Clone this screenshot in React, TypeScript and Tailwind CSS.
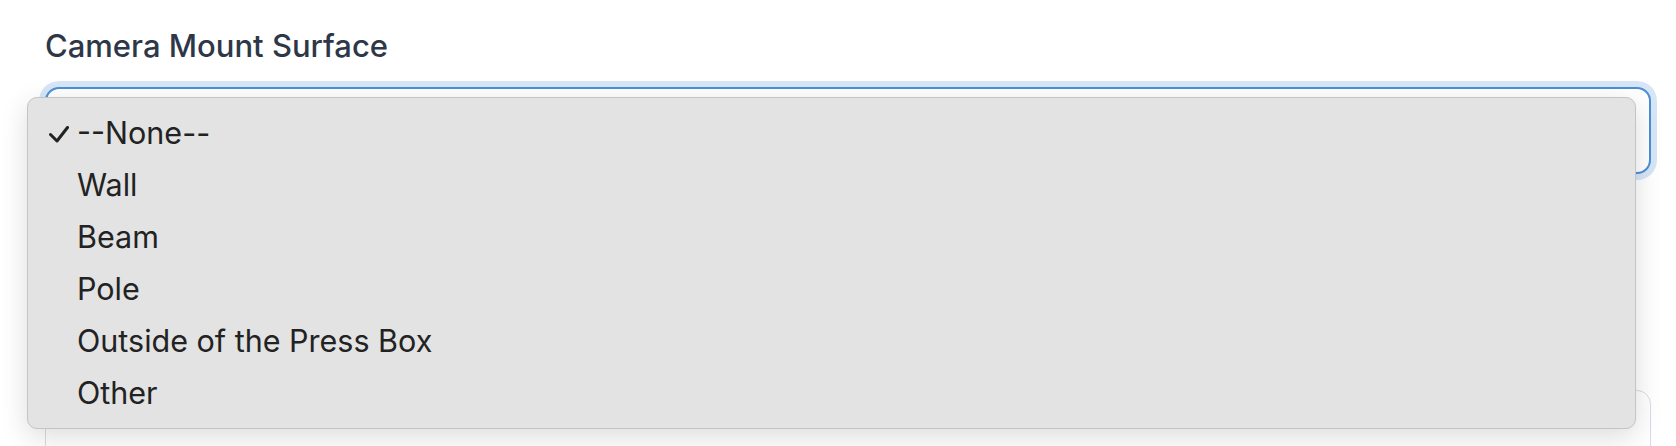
import { useState } from "react";

// Options shown in the open native select menu
const options = ["--None--", "Wall", "Beam", "Pole", "Outside of the Press Box", "Other"];

export default function App() {
  const [selected] = useState("--None--");

  return (
    <div className="relative h-screen w-full overflow-hidden bg-white font-['Inter',sans-serif] pl-[45px] pr-[25px] pt-[27px]">
      {/* Field label */}
      <div className="text-[31px] leading-[37px] font-medium text-[#2d3748]">Camera Mount Surface</div>

      {/* Focused select box (mostly covered by the menu) */}
      <div className="mt-[23px] h-[87px] w-full rounded-[14px] border-2 border-[#4a8fd6] bg-white shadow-[0_0_0_6px_rgba(74,143,214,0.22)]" />

      {/* Next field peeking out below */}
      <div className="mt-[216px] h-[80px] w-full rounded-[14px] border border-[#d9dce4] bg-white" />

      {/* Open dropdown menu overlay */}
      <div className="absolute left-[27px] top-[97px] w-[1609px] rounded-[10px] border border-[#c4c4c4] bg-[#e3e3e3] py-[9px] shadow-[0_8px_28px_rgba(0,0,0,0.14)]">
        {options.map((opt) => (
          <div key={opt} className="flex h-[52px] items-center text-[30.5px] leading-[52px] text-[#222222]">
            <div className="flex w-[49px] shrink-0 items-center pl-[21px]">
              {opt === selected && (
                <svg width="20" height="17" viewBox="0 0 20 17" className="mt-[2px]">
                  <path d="M1.5 8.5 L8 15 L18.5 1.5" fill="none" stroke="#222222" strokeWidth="3" strokeLinecap="round" strokeLinejoin="round" />
                </svg>
              )}
            </div>
            <span>{opt}</span>
          </div>
        ))}
      </div>
    </div>
  );
}
